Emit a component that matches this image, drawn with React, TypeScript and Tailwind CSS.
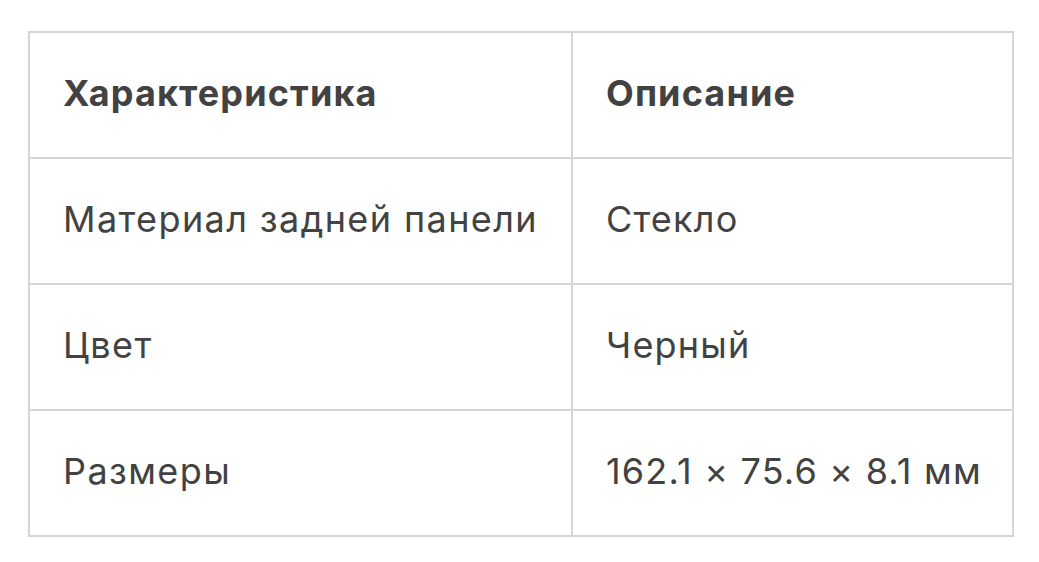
const rows = [
  { name: "Материал задней панели", value: "Стекло" },
  { name: "Цвет", value: "Черный" },
  { name: "Размеры", value: "162.1 × 75.6 × 8.1 мм" },
];

export default function App() {
  return (
    <main className="w-[1039px] h-[562px] bg-white pl-[28px] pt-[31px] font-['Inter',sans-serif] text-[#424242] tracking-[1.2px]">
      <table className="w-[986px] border-collapse border-2 border-[#d6d6d6] text-left">
        <thead>
          <tr>
            <th className="w-[543px] border-2 border-[#d6d6d6] pl-[33px] pr-[20px] pt-[33px] pb-[37px] text-[36px] leading-[54px] font-bold tracking-[1.15px]">
              Характеристика
            </th>
            <th className="border-2 border-[#d6d6d6] pl-[33px] pr-[20px] pt-[33px] pb-[37px] text-[36px] leading-[54px] font-bold tracking-[1.15px]">
              Описание
            </th>
          </tr>
        </thead>
        <tbody>
          {rows.map((row) => (
            <tr key={row.name}>
              <td className="border-2 border-[#d6d6d6] pl-[33px] pr-[20px] pt-[33px] pb-[37px] text-[36px] leading-[54px] tracking-[1.4px] whitespace-nowrap">
                {row.name}
              </td>
              <td className="border-2 border-[#d6d6d6] pl-[33px] pr-[20px] pt-[33px] pb-[37px] text-[36px] leading-[54px] whitespace-nowrap">
                {row.value}
              </td>
            </tr>
          ))}
        </tbody>
      </table>
    </main>
  );
}
